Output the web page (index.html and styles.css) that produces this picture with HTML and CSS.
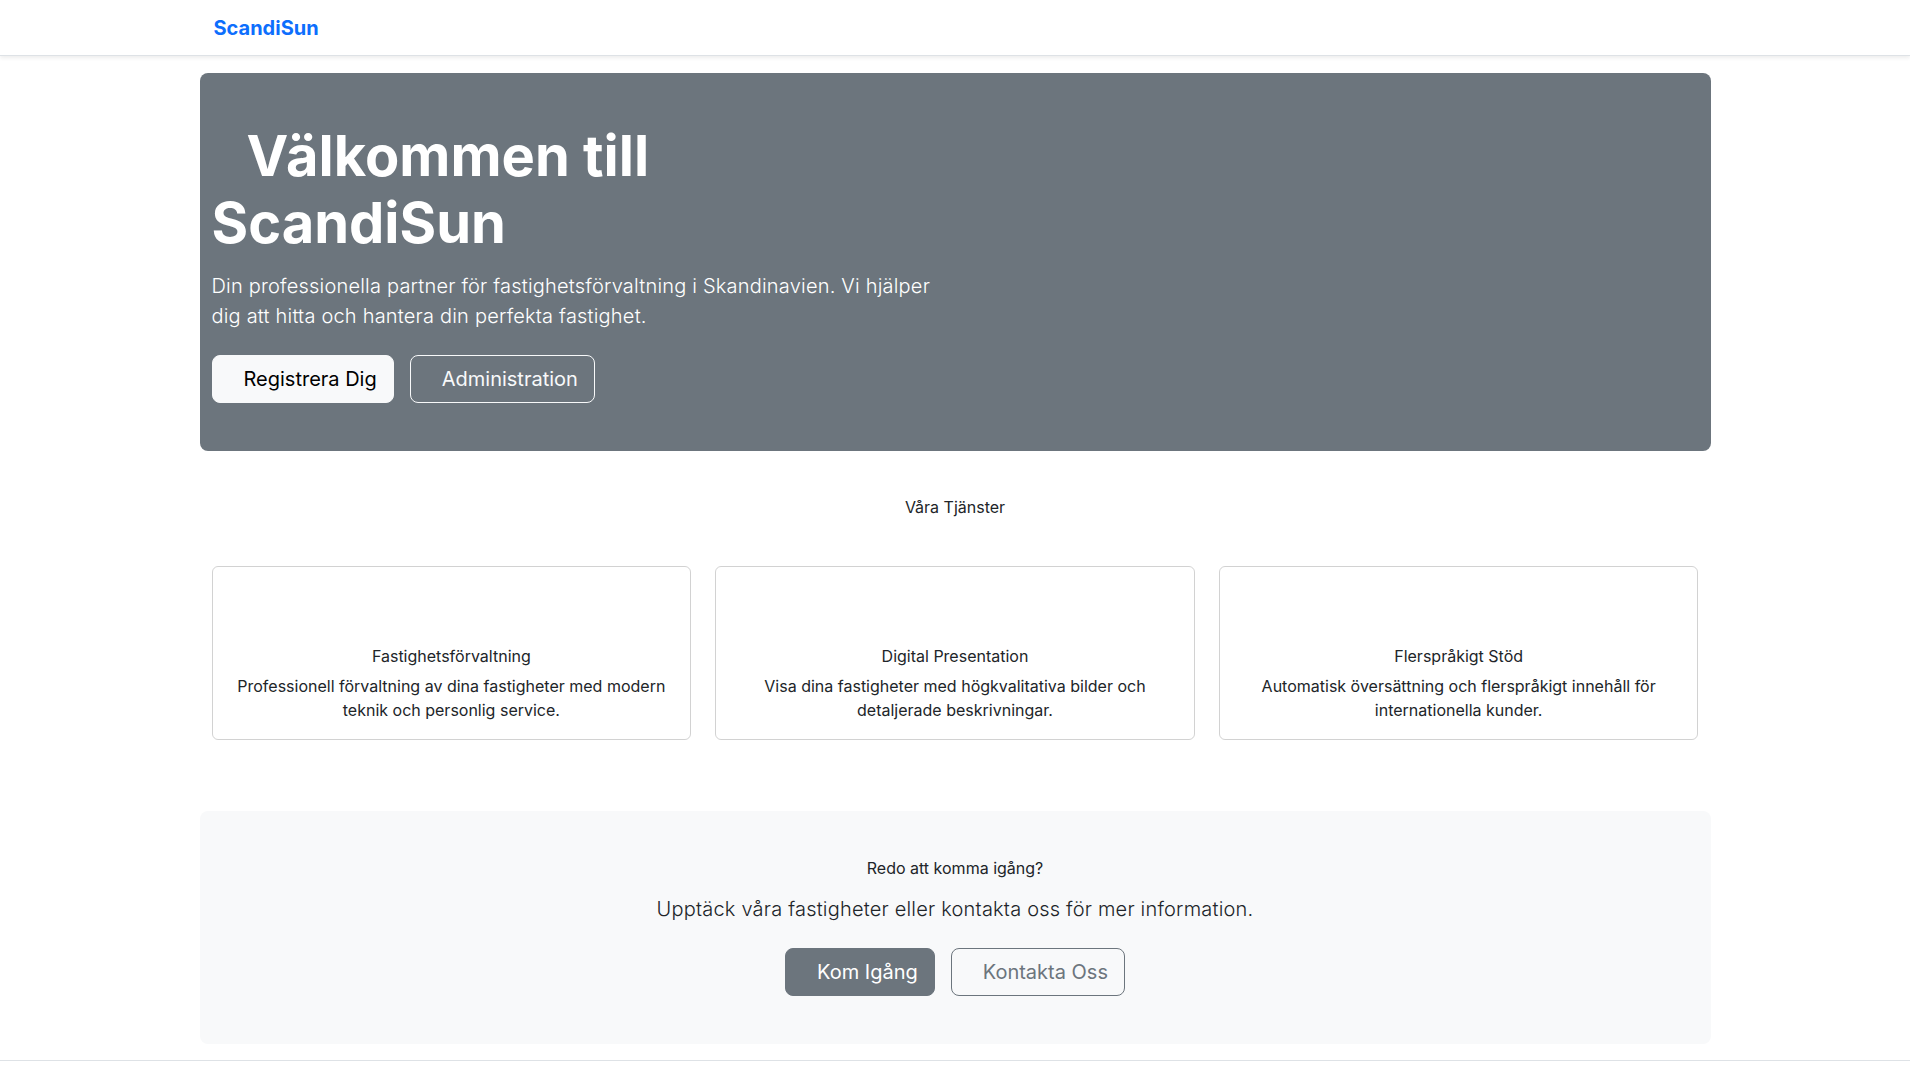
FILE: index.html
```html
<!DOCTYPE html>
<html lang="sv">
  <head>
    <meta charset="utf-8" />
    <title>ScandiSun - Fastighetsförvaltning</title>
    <link rel="stylesheet" href="styles.css">
  </head>
  <body>
    <nav class="navbar">
      <div class="nav-inner">
        <a class="brand" href="#">ScandiSun</a>
      </div>
    </nav>

    <main class="page">
      <section class="hero">
        <div class="hero-text">
          <h1 class="hero-title"><span class="icon-slot big"></span>Välkommen till ScandiSun</h1>
          <p class="lead">Din professionella partner för fastighetsförvaltning i Skandinavien. Vi hjälper dig att hitta och hantera din perfekta fastighet.</p>
          <div class="actions">
            <a href="#" class="btn btn-light"><span class="icon-slot"></span>Registrera Dig</a>
            <a href="#" class="btn btn-outline-light"><span class="icon-slot"></span>Administration</a>
          </div>
        </div>
      </section>

      <section class="services">
        <h2 class="section-title">Våra Tjänster</h2>
        <div class="cards">
          <div class="card">
            <div class="card-icon"></div>
            <h5 class="card-title">Fastighetsförvaltning</h5>
            <p class="card-text">Professionell förvaltning av dina fastigheter med modern teknik och personlig service.</p>
          </div>
          <div class="card">
            <div class="card-icon"></div>
            <h5 class="card-title">Digital Presentation</h5>
            <p class="card-text">Visa dina fastigheter med högkvalitativa bilder och detaljerade beskrivningar.</p>
          </div>
          <div class="card">
            <div class="card-icon"></div>
            <h5 class="card-title">Flerspråkigt Stöd</h5>
            <p class="card-text">Automatisk översättning och flerspråkigt innehåll för internationella kunder.</p>
          </div>
        </div>
      </section>

      <section class="cta">
        <h2 class="cta-title">Redo att komma igång?</h2>
        <p class="lead dark">Upptäck våra fastigheter eller kontakta oss för mer information.</p>
        <div class="actions center">
          <a href="#" class="btn btn-secondary"><span class="icon-slot"></span>Kom Igång</a>
          <a href="#" class="btn btn-outline-secondary"><span class="icon-slot"></span>Kontakta Oss</a>
        </div>
      </section>
    </main>

    <footer class="footer"></footer>
  </body>
</html>
```

FILE: styles.css
```css
body {
  margin: 0 10px 0 0;
  font-family: Inter, "Noto Sans", Arial, sans-serif;
  font-size: 16px;
  line-height: 1.5;
  color: #212529;
  background-color: #fff;
}

a {
  text-decoration: none;
}

h1,
h2,
h5 {
  margin: 0;
  line-height: 1.2;
}

/* navbar */
.navbar {
  height: 55px;
  padding: 0;
  border-bottom: 1px solid #dee2e6;
  box-shadow: 0 2px 4px rgba(0, 0, 0, 0.075);
  background-color: #fff;
}

.nav-inner {
  max-width: 1511px;
  margin: 0 auto;
  padding: 0 12px;
  box-sizing: border-box;
  height: 100%;
  display: flex;
  align-items: center;
}

.brand {
  color: #0d6efd;
  font-size: 20px;
  font-weight: 700;
  line-height: 30px;
  padding: 5px 0 5px 2px;
}

/* page */
.page {
  max-width: 1511px;
  margin: 17px auto 0;
}

.hero {
  background-color: #6c757d;
  border-radius: 8px;
  padding: 48px 12px;
  color: #fff;
}

.hero-text {
  width: 730px;
}

.hero-title {
  font-size: 56px;
  font-weight: 700;
  margin-top: 2px;
  margin-bottom: 14px;
}

.icon-slot {
  display: inline-block;
  width: 15px;
}

.icon-slot.big {
  width: 35px;
}

.lead {
  font-size: 20px;
  font-weight: 300;
  line-height: 1.5;
  letter-spacing: 0.2px;
  margin: 0 0 24px;
}

.lead.dark {
  color: #212529;
}

.actions {
  display: flex;
  gap: 16px;
}

.actions.center {
  justify-content: center;
}

.btn {
  display: inline-block;
  padding: 8px 16px;
  font-size: 20px;
  line-height: 1.5;
  border: 1px solid transparent;
  border-radius: 8px;
}

.btn-light {
  background-color: #f8f9fa;
  border-color: #f8f9fa;
  color: #000;
}

.btn-outline-light {
  border-color: #f8f9fa;
  color: #f8f9fa;
}

.btn-secondary {
  background-color: #6c757d;
  border-color: #6c757d;
  color: #fff;
}

.btn-outline-secondary {
  border-color: #6c757d;
  color: #6c757d;
}

/* services */
.services {
  margin-top: 47px;
  text-align: center;
}

.section-title {
  font-size: 16px;
  font-weight: 400;
  margin-bottom: 48px;
}

.cards {
  display: grid;
  grid-template-columns: repeat(3, 1fr);
  gap: 24px;
  padding: 0 12px;
}

.card {
  border: 1px solid rgba(0, 0, 0, 0.175);
  border-radius: 6px;
  padding: 16px 16px 17px;
}

.card-icon {
  height: 48px;
  margin-bottom: 16px;
}

.card-title {
  font-size: 16px;
  font-weight: 400;
  margin-bottom: 8px;
}

.card-text {
  margin: 0;
}

/* call to action */
.cta {
  margin-top: 71px;
  background-color: #f8f9fa;
  border-radius: 8px;
  padding: 48px 12px;
  text-align: center;
}

.cta-title {
  font-size: 16px;
  font-weight: 400;
  margin-bottom: 16px;
}

.footer {
  margin-top: 16px;
  border-top: 1px solid #dee2e6;
  height: 64px;
}
```
